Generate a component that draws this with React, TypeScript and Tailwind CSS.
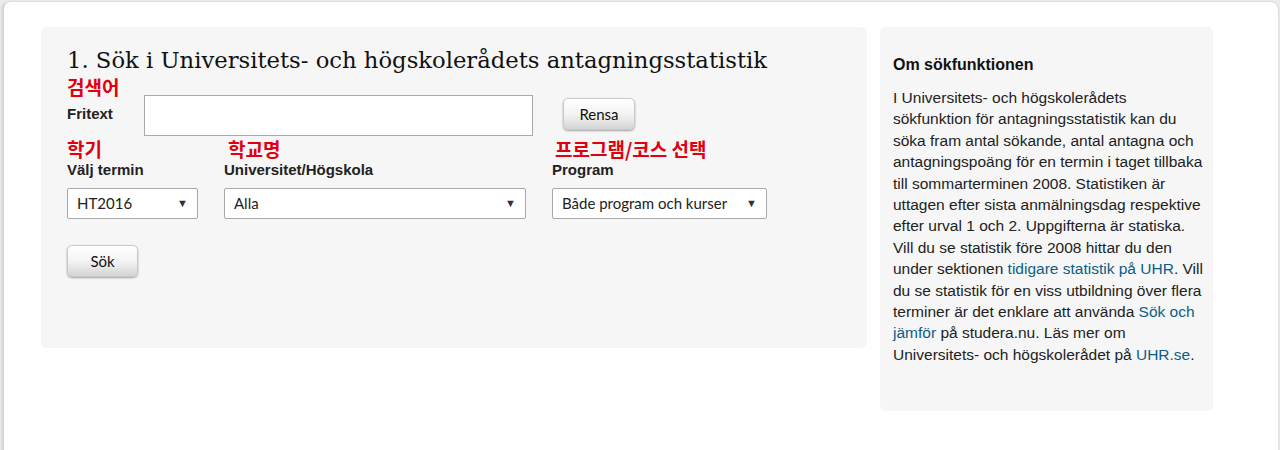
import React from 'react';

const Korean: React.FC<{ children: React.ReactNode; className?: string }> = ({ children, className = '' }) => (
  <div
    className={`text-[19px] leading-[22px] font-bold text-[#e0000f] ${className}`}
    style={{ fontFamily: '"Noto Sans CJK KR", "Noto Sans", sans-serif' }}
  >
    {children}
  </div>
);

const Label: React.FC<{ children: React.ReactNode; className?: string }> = ({ children, className = '' }) => (
  <div className={`text-[15px] leading-[18px] font-bold text-[#222] ${className}`}>{children}</div>
);

const Select: React.FC<{ value: string; className?: string }> = ({ value, className = '' }) => (
  <div
    className={`h-[31px] bg-white border border-[#a9a9a9] rounded-[2px] flex items-center justify-between pl-[9px] pr-[9px] text-[15px] text-[#222] ${className}`}
    style={{ fontFamily: 'Lato, "Noto Sans", sans-serif' }}
  >
    <span className="whitespace-nowrap">{value}</span>
    <span className="text-[11px] text-[#333] ml-2">▼</span>
  </div>
);

const Button: React.FC<{ label: string; className?: string }> = ({ label, className = '' }) => (
  <button
    className={`h-[32px] rounded-[5px] border border-[#c9c9c9] bg-gradient-to-b from-white via-[#f4f4f4] to-[#d4d4d4] shadow-[0_1px_2px_rgba(0,0,0,0.35)] text-[15px] text-[#111] ${className}`}
    style={{ fontFamily: 'Lato, "Noto Sans", sans-serif' }}
  >
    {label}
  </button>
);

export default function App() {
  return (
    <div className="w-[1280px] h-[450px] bg-[#ececec] pt-[2px] pl-[2px] pr-[2px] overflow-hidden">
      <div
        className="h-[460px] bg-white rounded-t-[8px] border-l-2 border-[#d6d6d6] shadow-[0_0_3px_rgba(0,0,0,0.15)] pt-[25px] pl-[37px] flex gap-[13px]"
        style={{ fontFamily: '"Liberation Sans", Arial, sans-serif' }}
      >
        {/* Search panel */}
        <div className="w-[826px] h-[321px] bg-[#f6f6f6] rounded-[5px] pl-[26px] pt-[17px]">
          <h1
            className="leading-[32px] text-[#111]"
            style={{ fontFamily: '"DejaVu Serif", Georgia, serif', fontSize: '22.7px' }}
          >
            1. Sök i Universitets- och högskolerådets antagningsstatistik
          </h1>
          <Korean>검색어</Korean>
          <div className="flex items-start mt-[-3px]">
            <Label className="w-[77px] mt-[10px]">Fritext</Label>
            <div className="w-[389px] h-[41px] bg-white border border-[#a9a9a9]" />
            <Button label="Rensa" className="w-[72px] ml-[30px] mt-[3px]" />
          </div>
          <div className="flex mt-[2px]">
            <div className="w-[157px]">
              <Korean>학기</Korean>
              <Label className="mt-[1px]">Välj termin</Label>
              <Select value="HT2016" className="w-[131px] mt-[9px]" />
            </div>
            <div className="w-[328px]">
              <Korean className="pl-[4px]">학교명</Korean>
              <Label className="mt-[1px]">Universitet/Högskola</Label>
              <Select value="Alla" className="w-[302px] mt-[9px]" />
            </div>
            <div>
              <Korean className="pl-[3px]">프로그램/코스 선택</Korean>
              <Label className="mt-[1px]">Program</Label>
              <Select value="Både program och kurser" className="w-[215px] mt-[9px]" />
            </div>
          </div>
          <Button label="Sök" className="w-[71px] mt-[26px]" />
        </div>

        {/* Info panel */}
        <div className="w-[333px] h-[384px] bg-[#f6f6f6] rounded-[5px] pl-[13px] pr-[8px] pt-[28px]">
          <h2 className="text-[16px] leading-[20px] font-bold text-[#111]">Om sökfunktionen</h2>
          <p className="mt-[12px] text-[15.5px] leading-[21.4px] text-[#222]">
            I Universitets- och högskolerådets sökfunktion för antagningsstatistik kan du söka fram antal sökande, antal
            antagna och antagningspoäng för en termin i taget tillbaka till sommarterminen 2008. Statistiken är uttagen
            efter sista anmälningsdag respektive efter urval 1 och 2. Uppgifterna är statiska. Vill du se statistik före
            2008 hittar du den under sektionen <a className="text-[#0a5f87]">tidigare statistik på UHR</a>. Vill du se
            statistik för en viss utbildning över flera terminer är det enklare att använda{' '}
            <a className="text-[#0a5f87]">Sök och jämför</a> på studera.nu. Läs mer om Universitets- och högskolerådet på{' '}
            <a className="text-[#0a5f87]">UHR.se</a>.
          </p>
        </div>
      </div>
    </div>
  );
}
